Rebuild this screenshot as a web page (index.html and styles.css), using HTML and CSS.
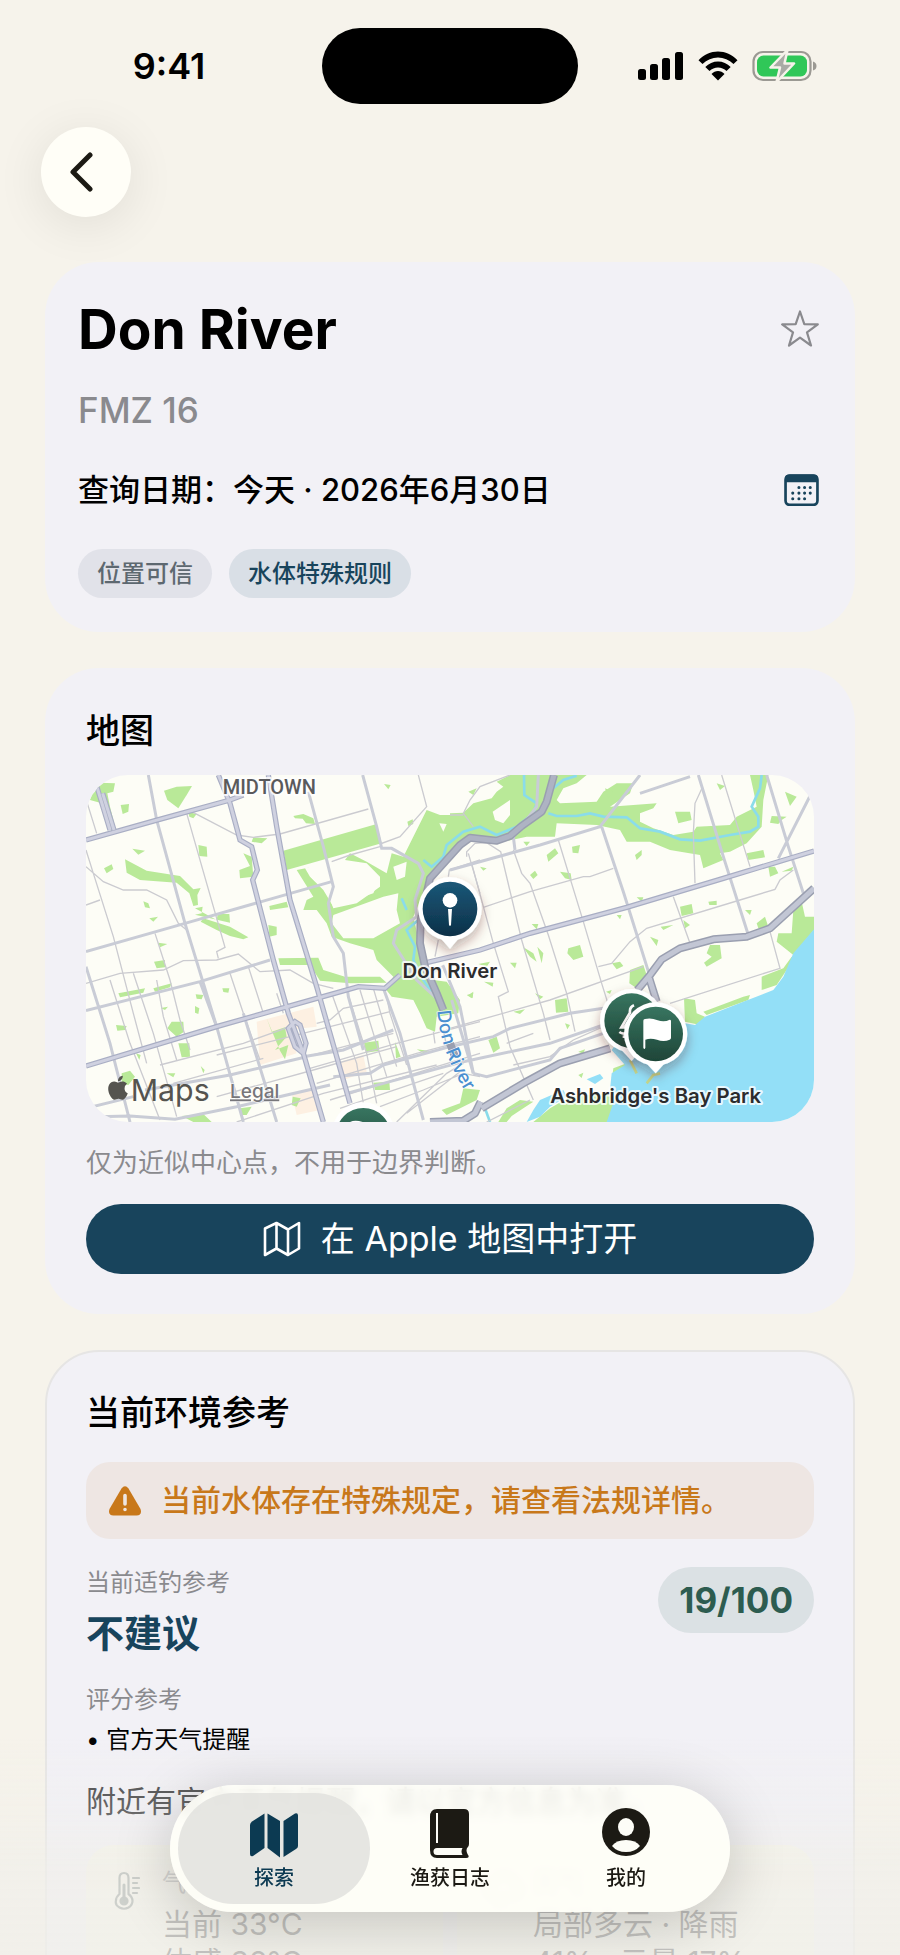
FILE: index.html
```html
<!DOCTYPE html>
<html lang="zh-CN">
<head>
  <meta charset="UTF-8" />
  <meta name="viewport" content="width=device-width, initial-scale=1.0" />
  <title>Don River</title>
  <link rel="stylesheet" href="styles.css">
</head>
<body>
  <div class="status-bar">
    <span class="time">9:41</span>
    <div class="island"></div>
    <div class="status-icons">
      <svg width="46" height="30" viewBox="0 0 46 30">
        <rect x="0" y="18" width="8" height="11" rx="2.5" />
        <rect x="12" y="13" width="8" height="16" rx="2.5" />
        <rect x="24" y="7" width="8" height="22" rx="2.5" />
        <rect x="37" y="1" width="8" height="28" rx="2.5" />
      </svg>
      <svg width="40" height="30" viewBox="0 0 40 30">
        <path d="M0.5 9.2C11-2.4 29-2.4 39.500 9.200L35.500 13C27 4.300 13 4.300 4.500 13z" />
        <path d="M7.300 16C14 8.500 26 8.500 32.700 16L28.500 20C24 15.200 16 15.200 11.500 20z" />
        <path d="M13.500 23C17 19 23 19 26.500 23L20 29.500z" />
      </svg>
      <svg width="66" height="32" viewBox="0 0 66 32">
        <rect x="1.500" y="2" width="57" height="28" rx="9.500" fill="none" stroke="#9b9993" stroke-width="2.200" />
        <rect x="5" y="5.500" width="50" height="21" rx="6.500" fill="#30c758" />
        <path d="M61 11.500q3.500 1 3.500 4.500t-3.500 4.500z" fill="#9b9993" />
        <path d="M35.500 0L18.500 17.500h9.500L24.500 32L42 13.500h-9.500z" fill="#a9aaa5" stroke="#f6f2ea" stroke-width="2.500" stroke-linejoin="round" />
      </svg>
    </div>
  </div>

  <nav class="nav">
    <button class="back" aria-label="返回">
      <svg width="24" height="40" viewBox="0 0 24 40"><path d="M20 3L3 20L20 37" fill="none" stroke="#1c1a14" stroke-width="5" stroke-linecap="round" stroke-linejoin="round" /></svg>
    </button>
  </nav>

  <main>
    <section class="card summary">
      <div class="row">
        <h1>Don River</h1>
        <button class="icon-btn" aria-label="收藏">
          <svg width="38" height="38" viewBox="0 0 38 38"><path d="M19 1.500L23.300 14.200L36.800 14.400L26 22.400L30 35.500L19 27.700L8 35.500L12 22.400L1.200 14.400L14.700 14.200z" fill="none" stroke="#8a8a8e" stroke-width="2.200" stroke-linejoin="round" /></svg>
        </button>
      </div>
      <p class="zone">FMZ 16</p>
      <div class="row date-row">
        <span>查询日期：今天 · 2026年6月30日</span>
        <button class="icon-btn" aria-label="选择日期">
          <svg width="35" height="32" viewBox="0 0 34 31">
            <rect x="1.500" y="1.500" width="31" height="28.500" rx="4" fill="none" stroke="#18445c" stroke-width="2.600" />
            <path d="M1 8V4q0-3.500 3.500-3.500h25q3.500 0 3.500 3.500v4z" fill="#18445c" />
            <path d="M14.500 13h0M20 13h0M25.500 13h0M8.500 18.500h0M14.500 18.500h0M20 18.500h0M25.500 18.500h0M8.500 24h0M14.500 24h0M20 24h0" stroke="#18445c" stroke-width="3" stroke-linecap="round" />
          </svg>
        </button>
      </div>
      <div class="chips">
        <span class="chip">位置可信</span>
        <span class="chip chip-blue">水体特殊规则</span>
      </div>
    </section>

    <section class="card map-card">
      <h2>地图</h2>
      <svg class="map" viewBox="168 345 2184 1041" preserveAspectRatio="xMidYMid slice">
        <defs>
          <linearGradient id="blue" x1="0" y1="0" x2="0" y2="1"><stop offset="0" stop-color="#1b5878" /><stop offset="1" stop-color="#0c3048" /></linearGradient>
          <linearGradient id="green" x1="0" y1="0" x2="0" y2="1"><stop offset="0" stop-color="#387560" /><stop offset="1" stop-color="#1e4538" /></linearGradient>
          <filter id="shadow" x="-40%" y="-40%" width="180%" height="190%"><feDropShadow dx="0" dy="16" stdDeviation="18" flood-color="#502020" flood-opacity=".35" /></filter>
          <path id="river-label" d="M1222 1052C1226 1100 1236 1150 1258 1200C1276 1250 1306 1295 1345 1360" />
        </defs>
        <rect x="168" y="345" width="2184" height="1045" fill="#fdfdf6" />

        <!-- commercial blocks -->
        <g fill="#fdf0e2">
          <path d="M680 1085L850 1040L860 1100L770 1110L800 1180L690 1215z" />
          <path d="M930 1205L1000 1185L1010 1235L940 1260z" />
          <path d="M785 1300L850 1290L870 1350L800 1365z" />
        </g>

        <!-- parks -->
        <g class="park">
          <path d="M205 368L255 370L250 395L232 400L240 440L258 512L245 515L215 430L180 420L185 405L205 385z" />
          <path d="M402 392L440 380L486 378L470 405L445 445L412 420z" />
          <path d="M272 435L297 432L295 455L278 462z" />
          <path d="M475 456L500 462L490 475L478 470z" />
          <path d="M505 555L530 560L532 590L508 588z" />
          <path d="M307 566L345 572L325 584z" />
          <path d="M222 625L245 613L250 627L230 640z" />
          <path d="M285 598L350 632L450 648L490 688L512 684L502 705L504 735L490 738L478 700L440 668L330 660L290 638z" />
          <path d="M340 724L355 730L360 745L345 742z" />
          <path d="M358 775L384 770L370 785z" />
          <path d="M495 745L518 740L515 760L495 764L600 788L598 762L563 762L560 780zM520 775L600 800L655 832L640 838L600 828L560 810L512 785z" />
          <path d="M640 580L665 590L670 650L630 655L628 630L660 618z" />
          <path d="M670 532L712 535L695 550L665 545z" />
          <path d="M790 468L820 462L850 475L855 492L828 490L818 476L795 475z" />
          <path d="M760 572L1040 492L1055 550L770 630z" />
          <path d="M800 630L850 620L860 650L890 690L910 745L980 730L1050 680L1050 650L1010 610L945 600L960 580L1010 605L1070 640L1085 580L1120 590L1190 450L1230 465L1290 465L1350 455L1390 500L1330 520L1290 555L1200 655L1150 770L1180 900L1210 960L1250 965L1290 1020L1285 1060L1220 1070L1215 1115L1190 1105L1170 1060L1150 1020L1085 1010L1065 985L1090 950L1040 900L1030 870L960 850L905 830L890 790L860 750L820 750L830 720L850 710z" />
          <path d="M745 895L865 893L880 930L945 950L1050 950L1070 968L960 970L870 962L840 915L750 915z" />
          <path d="M718 738L770 725L775 742L720 750z" />
          <path d="M715 795L740 800L740 825L718 830z" />
          <path d="M948 788L980 785L965 810z" />
          <path d="M385 848L412 852L390 862zM372 905L405 900L405 922L380 925z" />
          <path d="M265 1000L345 985L340 998L270 1012zM370 985L425 970L420 982L375 995z" />
          <path d="M577 985L598 985L595 998L580 996zM497 1003L520 1005L515 1018L500 1016zM495 1038L508 1045L505 1062L495 1058zM392 1044L414 1040L405 1050z" />
          <path d="M258 1095L290 1098L285 1110L262 1112zM412 1105L425 1085L460 1085L462 1115L440 1130zM445 1150L478 1150L480 1190L455 1192z" />
          <path d="M275 1240L300 1232L315 1250L295 1275L275 1272zM410 1240L436 1240L430 1252zM512 1218L524 1230L520 1240zM318 1180L332 1185L328 1200z" />
          <path d="M455 1368L520 1362L545 1386L490 1386zM630 1345L665 1340L650 1365L635 1365zM788 1310L812 1315L800 1340L785 1335z" />
          <path d="M710 1075L725 1115L765 1102L770 1130L735 1170L775 1155L765 1198L750 1172z" />
          <path d="M1002 1148L1045 1142L1048 1172L1008 1178zM1030 1268L1078 1265L1080 1290L1035 1290zM1160 1168L1195 1172L1185 1182zM1095 1145L1112 1190L1098 1195z" />
          <path d="M1235 1350L1290 1330L1300 1285L1350 1290L1340 1320L1250 1365zM1315 1005L1330 995L1328 1015z" />
          <path d="M1062 372L1082 375L1075 388zM1132 485L1148 478L1150 492L1135 498zM1315 395L1340 385L1330 405z" />
          <path d="M1260 460L1300 458L1330 430L1385 415L1400 395L1420 380L1400 365L1440 345L1670 345L1640 370L1600 385L1580 420L1590 430L1700 425L1720 395L1760 370L1810 370L1800 400L1740 440L1880 430L1870 445L1830 460L1830 485L1870 505L1930 525L1990 515L2000 500L2100 495L2120 470L2180 440L2170 390L2160 345L2215 345L2200 420L2195 500L2150 550L2100 575L2070 580L2080 600L2020 625L2010 585L1920 570L1860 545L1790 545L1770 510L1700 495L1580 490L1575 530L1490 530L1400 550L1260 540z" />
        </g>
        <g fill="#fdfdf6">
          <path d="M825 625L910 600L1000 615L1045 665L1030 700L910 740L880 690L840 650z" />
          <path d="M1090 620L1130 605L1125 650L1100 660z" />
          <path d="M910 765L1060 710L1105 700L1100 750L1110 790L1030 835L940 835L905 790z" />
          <path d="M1228 490L1250 492L1240 515z" />
          <path d="M1388 455L1440 420L1440 465L1420 490L1395 480z" />
        </g>
        <g class="park">
          <path d="M1935 455L1980 455L1985 480L1945 490zM1725 385L1750 395L1735 415zM2060 370L2085 378L2070 390zM2265 395L2300 410L2280 438z" />
          <path d="M2270 470L2255 480L2245 492L2220 488L2225 468z" />
          <path d="M1626 560L1650 555L1645 580L1628 578zM1550 585L1575 565L1585 580L1555 605zM1480 545L1500 545L1490 558zM1350 620L1370 625L1360 632z" />
          <path d="M1500 645L1515 632L1523 645L1510 657zM1590 635L1622 640L1625 660L1605 655z" />
          <path d="M1815 585L1835 570L1835 585L1820 600z" />
          <path d="M2150 580L2200 570L2205 592L2155 600zM2215 620L2235 620L2245 640L2220 650zM2255 635L2290 620L2285 632z" />
          <path d="M1820 712L1840 712L1835 725zM1760 765L1775 765L1770 778zM1505 792L1525 792L1520 808z" />
          <path d="M1950 740L1985 732L1990 760L1955 768zM2035 725L2060 722L2060 735L2038 735zM1960 780L1980 795L1965 805zM1892 800L1930 795L1900 810zM1860 830L1885 840L1880 858zM2145 750L2165 750L2160 765zM2180 790L2205 770L2215 800L2185 805z" />
          <path d="M2040 855L2070 855L2075 895L2030 920L2022 908L2045 890L2030 880z" />
          <path d="M2290 750L2315 725L2325 770L2352 770L2352 810L2290 885L2240 845L2245 820L2285 820z" />
          <path d="M2195 950L2260 925L2285 890L2290 900L2240 975L2195 990z" />
          <path d="M1962 1015L1995 1020L2000 1060L2025 1070L2010 1095L1965 1085zM2020 1055L2140 1010L2160 1005L2155 1020L2030 1065z" />
          <path d="M1800 930L1840 915L1855 960L1820 985L1798 970z" />
          <path d="M1615 865L1650 855L1660 890L1630 900L1612 880zM1478 860L1510 880L1520 905L1500 890zM1522 860L1540 880L1535 910zM1440 908L1460 908L1455 925zM1746 910L1770 905L1780 918L1760 928z" />
          <path d="M1575 1020L1610 1015L1615 1055L1578 1058zM1450 1055L1485 1048L1470 1062zM1605 1090L1620 1095L1612 1108zM1375 1140L1400 1130L1410 1165L1390 1178zM1515 1000L1540 1010L1530 1018zM1728 995L1745 990L1740 1002z" />
          <path d="M1345 912L1380 905L1370 920zM1362 965L1390 968L1388 980zM1310 1005L1330 1000L1325 1015zM1260 980L1285 1020L1280 1060L1262 1040z" />
          <path d="M1645 1175L1665 1168L1660 1182zM1645 1245L1660 1238L1655 1254zM1430 1345L1470 1320L1510 1325L1480 1345L1445 1368L1430 1386L1405 1386z" />
          <path d="M1510 1386L1560 1345L1620 1310L1740 1300L1750 1225L1790 1210L1785 1235L1745 1250L1760 1360L1730 1386z" />
        </g>

        <!-- lake and rivers -->
        <g fill="#93dff7">
          <path d="M2352 808L2290 880L2260 950L2230 990L2140 1025L2025 1070L1995 1095L1965 1090L1935 1150L1760 1150L1745 1170L1785 1215L1745 1240L1740 1290L1760 1300L1730 1386L2352 1390z" />
          <path d="M1490 1386L1510 1350L1530 1320L1600 1290L1610 1310L1560 1340L1530 1370z" />
          <path d="M1670 1258L1710 1242L1720 1255L1695 1272z" />
        </g>
        <path d="M1800 1200L1820 1240M1850 1270L1870 1245L1890 1240" fill="none" stroke="#c5d78c" stroke-width="8" />
        <g fill="none" stroke="#8adcea" stroke-width="8">
          <path d="M1482 345L1483 405L1520 430L1510 460L1460 500L1400 525L1350 500L1300 515L1250 555L1240 590L1205 620L1180 600" />
          <path d="M1555 460L1580 468L1640 468L1680 460L1720 470L1790 472L1830 505L1890 515L1950 538L2010 542L2100 525L2160 515L2185 500L2185 470L2165 440L2190 385L2195 345" />
          <path d="M1570 385L1600 360L1640 347" />
          <path d="M1115 715L1130 750M1165 780L1130 810L1155 860L1150 900L1180 960L1215 1010" />
          <path d="M1365 1345L1380 1386" />
        </g>

        <!-- minor streets -->
        <g fill="none" stroke="#cbcbd0" stroke-width="4">
          <path d="M172 430L200 520M470 460L530 670L585 862L560 875L565 895M485 455L620 525L670 532L750 522L1015 447M1165 345L1190 440L1110 530L1050 552M168 570L190 640L250 830L310 1060L350 1210M168 620L220 665L280 690L350 690L410 720L445 790L470 810" />
          <path d="M168 735L210 720M375 820L420 960L450 1080L480 1170M168 970L270 940L400 930L460 902L560 900L625 882L690 935L780 930L850 970L910 985" />
          <path d="M240 960L300 1150L390 1380M310 940L370 1120L440 1370M380 960L400 1070L440 1200M600 940L640 1060L690 1200M655 920L700 1060M740 1000L760 1060M1060 1020L940 1045L900 1080L860 1090M1080 1055L960 1085L560 1185" />
          <path d="M390 1215L640 1150L780 1100M430 1270L700 1195M560 1310L850 1230L1100 1160M620 1386L880 1300L1220 1215M905 1000L980 1210L1000 1330M950 990L1010 1180L1040 1330M990 990L1070 1250M1030 985L1100 1220M1070 1010L1080 1060L1130 1215" />
          <path d="M830 1190L1090 1120M840 1225L1100 1150L1350 1085M860 1270L1160 1180L1350 1130M900 1320L1220 1220L1350 1180M930 1345L1240 1240M1050 1340L1180 1290L1300 1240L1350 1250M1100 1386L1250 1240L1300 1210M1130 1360L1290 1235M1210 1115L1215 1150M1240 1110L1250 1160" />
          <path d="M1310 590L1310 575L1335 550L1370 548L1412 575L1425 630L1475 840L1540 1060L1560 1140M1325 610L1390 850L1435 995L1405 1010L1440 1160L1510 1320M1450 570L1475 640L1500 670L1555 825L1610 1000L1635 1115M1585 540L1660 785L1715 970L1740 1050" />
          <path d="M1360 742L1500 695L1660 650L1680 650L1750 625M1440 345L1350 380L1320 420L1300 460L1330 500M1260 465L1300 465M2018 380L1995 430L1990 520L1995 670M2075 345L2160 620M1930 710L1980 850M1705 920L1745 910L1800 845L1850 805L2130 720L2235 688L2250 660L2290 630" />
          <path d="M2220 815L2250 925L1920 1030M1260 1105L1560 1020L1840 920M1450 1215L1560 1190L1630 1140L1720 1100M1510 1120L1430 1150M1370 1386L1500 1320M905 605L960 585L1050 560M1315 580L1350 700M1255 650L1258 630L1350 600M1215 890L1225 840" />
        </g>

        <!-- arterials -->
        <g fill="none" stroke="#c9ccd6" stroke-width="9">
          <path d="M355 345L380 480L465 790L560 1100L640 1386M835 395L880 560L910 680L895 730L910 830L940 880L955 1010L1000 1170M998 345L1040 500L1055 565L1085 565L1165 610L1180 640L1155 720L1160 770L1100 810L1090 850L1160 960L1225 1020" />
          <path d="M168 875L465 790L905 665M168 1052L510 965L720 900M168 920L240 1150L300 1386M168 1345L310 1310M345 1290L600 1245L830 1190M200 1370L300 1368L435 1378L620 1340L900 1275M510 965L560 1100M640 1060L740 1386M820 1190L940 1170L1090 1110" />
          <path d="M1060 985L1110 1120L1180 1380M1180 950L1240 920L1290 1040L1330 1240M910 1250L1020 1240L1060 1215L1260 1160L1390 1130L1440 1105L1620 1060L1720 1045M950 1300L1300 1205L1560 1150L1720 1095M1330 1240L1370 1250L1560 1200L1590 1165L1720 1120" />
          <path d="M1260 630L1530 555L1710 500L1830 345M1715 500L1780 695L1860 950M1265 1020L1330 1240M1525 345L1520 440L1450 530L1455 570M1830 400L1980 350M2005 345L2080 590L2155 825M2210 345L2275 560L2320 700M2340 408L2245 595" />
        </g>

        <!-- main roads -->
        <g fill="none" stroke="#a9aec4" stroke-width="16">
          <path id="main-roads" d="M168 540L375 482L600 420L640 405M200 378L240 510M218 400L252 510M565 345L600 430L630 540L665 560L682 630L668 660L730 900L775 1060L820 1180L880 1386M715 345L740 500L780 720L860 980L960 1330M168 1218L560 1100L860 1015L985 980L1065 985L1110 945M1180 910L1350 870L1500 820L1790 742L2080 655L2352 573M795 1085L775 1105L795 1160L820 1180L828 1150L810 1095z" />
        </g>
        <use href="#main-roads" class="road-fill" />
        <g fill="none" stroke="#9a9fb0" stroke-width="24" stroke-linejoin="round">
          <path d="M1572 345L1550 425L1535 455L1475 498L1440 528L1400 542L1320 533L1290 555L1200 655L1172 780L1170 850L1185 920L1220 1000L1240 1050M1260 1150L1275 1190" />
          <path d="M1352 1325L1335 1360L1300 1382L1200 1386M1355 1345L1480 1270L1590 1210L1740 1165M1822 990L1860 945L1895 898L1950 865L2050 838L2150 830L2220 805L2352 685M1858 955L1880 1025" />
        </g>
        <g fill="none" stroke="#c2c6d4" stroke-width="15" stroke-linejoin="round">
          <path d="M1352 1325L1335 1360L1300 1382L1200 1386M1355 1345L1480 1270L1590 1210L1740 1165M1822 990L1860 945L1895 898L1950 865L2050 838L2150 830L2220 805L2352 685M1858 955L1880 1025" />
          <path d="M1572 345L1550 425L1535 455L1475 498L1440 528L1400 542L1320 533L1290 555L1200 655L1172 780L1170 850L1185 920L1220 1000L1240 1050" stroke="#aeb3c3" />
        </g>

        <!-- labels -->
        <text class="district" x="578" y="403">MIDTOWN</text>
        <text class="river"><textPath href="#river-label">Don River</textPath></text>

        <!-- pins -->
        <g filter="url(#shadow)">
          <path d="M1226 828L1260 866L1292 828z" fill="#fff" />
          <circle cx="1260" cy="747" r="95" fill="#fff" />
          <circle cx="1260" cy="747" r="82" fill="url(#blue)" />
          <circle cx="1260" cy="721" r="22" fill="#fff" />
          <path d="M1254 747h12l-3 47q-3 8-6 0z" fill="#fff" />
        </g>
        <g filter="url(#shadow)">
          <path d="M1770 1165L1805 1203L1838 1165z" fill="#fff" />
          <circle cx="1805" cy="1082" r="95" fill="#fff" />
          <circle cx="1805" cy="1082" r="82" fill="url(#green)" />
          <path d="M1812 1036q-14 6-12 22l-26 44h40M1768 1116q14 10 30-2M1778 1130h25" fill="none" stroke="#fff" stroke-width="8" />
          <path d="M1808 1062L1830 1050L1820 1104L1778 1100z" fill="#fff" />
        </g>
        <g filter="url(#shadow)">
          <path d="M1842 1202L1877 1240L1911 1202z" fill="#fff" />
          <circle cx="1877" cy="1122" r="95" fill="#fff" />
          <circle cx="1877" cy="1122" r="82" fill="url(#green)" />
          <path d="M1840 1082q0-5 5-5q18-5 38 4q20 7 36-2q4 0 4 4v50q0 4-4 6q-18 8-38 0q-20-6-35 0v24q-3 8-6 0z" fill="#fff" />
        </g>
        <circle cx="1000" cy="1422" r="95" fill="#fff" />
        <circle cx="1000" cy="1426" r="82" fill="url(#green)" />
        <path d="M960 1386q15-8 38 0h42v10h-80z" fill="#fff" />
        <text class="place" x="1260" y="953" text-anchor="middle">Don River</text>
        <text class="place" x="1877" y="1329" text-anchor="middle">Ashbridge's Bay Park</text>

        <g transform="translate(228 1247) scale(3)" fill="#55544f">
          <path d="M12.152 6.896c-.948 0-2.415-1.078-3.960-1.040-2.040.027-3.910 1.183-4.961 3.014-2.117 3.675-.546 9.103 1.519 12.090 1.013 1.454 2.208 3.090 3.792 3.039 1.520-.065 2.090-.987 3.935-.987 1.831 0 2.350.987 3.960.948 1.637-.026 2.676-1.480 3.676-2.948 1.156-1.688 1.636-3.325 1.662-3.415-.039-.013-3.182-1.221-3.220-4.857-.026-3.040 2.480-4.494 2.597-4.559-1.429-2.090-3.623-2.324-4.390-2.376-2-.156-3.675 1.090-4.610 1.090zM15.530 3.830c.843-1.012 1.400-2.427 1.245-3.830-1.207.052-2.662.805-3.532 1.818-.780.896-1.454 2.338-1.273 3.714 1.338.104 2.715-.688 3.560-1.701" />
        </g>
        <text class="brand" x="302" y="1322">Maps</text>
        <a href="#legal"><text class="legal" x="600" y="1315">Legal</text></a>
      </svg>
      <p class="caption">仅为近似中心点，不用于边界判断。</p>
      <button class="open-maps">
        <svg width="38" height="36" viewBox="0 0 38 36"><path d="M2 7.500L13.500 2L25 8.500L36 2V27.500L25 34L13.500 27.500L2 34zM13.500 2V27.500M25 8.500V34" fill="none" stroke="#fff" stroke-width="2.600" stroke-linejoin="round" /></svg>
        <span>在 Apple 地图中打开</span>
      </button>
    </section>

    <section class="card env-card">
      <h2>当前环境参考</h2>
      <div class="alert">
        <svg width="34" height="30" viewBox="0 0 34 30">
          <path d="M13.500 2.500q3.500-4.500 7 0L32.500 23q2 6-4 6.500H5.500q-6-.5-4-6.500z" fill="#c8781a" />
          <path d="M17 9.500v8.500M17 23.500v0" stroke="#eee6e2" stroke-width="3.600" stroke-linecap="round" />
        </svg>
        <span>当前水体存在特殊规定，请查看法规详情。</span>
      </div>
      <div class="score-row">
        <div>
          <p class="label">当前适钓参考</p>
          <p class="verdict">不建议</p>
        </div>
        <span class="score">19/100</span>
      </div>
      <p class="label factors">评分参考</p>
      <p class="factor">• 官方天气提醒</p>
      <p class="notice">附近有官方天气提醒，请以官方信息为准。</p>
      <div class="weather">
        <div class="tile">
          <svg width="26" height="40" viewBox="0 0 26 40" fill="none" stroke="#6d7a78" stroke-width="2.200" stroke-linecap="round">
            <path d="M5.500 23V7q0-5 4.500-5t4.500 5v16q4 3 4 7t-4 6.500q-4.500 2.500-9 0T1.900 30q0-4 3.600-7z" />
            <path d="M10 14v14" stroke-width="3" />
            <circle cx="10" cy="30" r="3.500" fill="#6d7a78" />
            <path d="M19 7h6M19 12h4M19 17h6M19 22h4" />
          </svg>
          <div>
            <p class="label">气温</p>
            <p>当前 33°C</p>
            <p>体感 38°C</p>
          </div>
        </div>
        <div class="tile">
          <svg width="36" height="40" viewBox="0 0 36 40" fill="none" stroke="#6d7a78" stroke-width="2.200"><path d="M9 26q-7-1-7-7t7-7q2-8 10-8t10 8q6 1 6 7t-7 7zM12 31l-2 4M20 31l-2 4" /></svg>
          <div>
            <p class="label">天气</p>
            <p>局部多云 · 降雨</p>
            <p>41% · 云量 17%</p>
          </div>
        </div>
      </div>
    </section>
  </main>

  <div class="fade"></div>
  <nav class="tab-bar">
    <a href="#explore" class="tab active">
      <svg width="50" height="48" viewBox="0 0 50 48" fill="#0c3a52">
        <path d="M15.500 2.500V37L4 45q-3 1-3-2V14q0-2 2-3.500z" />
        <path d="M18.500 2.500L31 10V46.500L18.500 37z" />
        <path d="M34.500 10L46 2.500q3-1 3 2V35q0 2-2 3L34.500 46z" />
      </svg>
      <span>探索</span>
    </a>
    <a href="#log" class="tab">
      <svg width="42" height="52" viewBox="0 0 42 52">
        <path d="M8 1h27q5 0 5 5v30q0 2-1.500 3.500q-2 2.500 0 6.500q3 4-1.500 4H8q-7 0-7-8V9q0-8 7-8z" fill="#1c1a14" />
        <path d="M8 5v30" stroke="#fdfdf7" stroke-width="2" />
        <path d="M8 40h25.500q-2 3.500 0 7H8q-3.500 0-3.500-3.500T8 40z" fill="#fdfdf7" />
      </svg>
      <span>渔获日志</span>
    </a>
    <a href="#me" class="tab">
      <svg width="48" height="48" viewBox="0 0 48 48">
        <circle cx="24" cy="24" r="24" fill="#1c1a14" />
        <ellipse cx="24" cy="19" rx="8" ry="9" fill="#fdfdf7" />
        <path d="M10 38q4-6 14-6t14 6q-5 6-14 6t-14-6z" fill="#fdfdf7" />
      </svg>
      <span>我的</span>
    </a>
  </nav>
</body>
</html>
```
FILE: styles.css
```css
* {
  box-sizing: border-box;
}
body {
  margin: 0;
  height: 100vh;
  overflow: hidden;
  background: #f6f3eb;
  color: #000;
  font-family: Inter, "Noto Sans CJK SC", sans-serif;
}
h1, h2, p {
  margin: 0;
}
button {
  padding: 0;
  border: none;
  background: none;
  font: inherit;
  cursor: pointer;
}
svg {
  display: block;
  flex: none;
}

/* status bar */
.status-bar {
  display: grid;
  grid-template-columns: 1fr 256px 1fr;
  align-items: center;
  padding: 28px 0 23px;
}
.time {
  padding-left: 16px;
  text-align: center;
  font-size: 36px;
  line-height: 44px;
  font-weight: 600;
}
.island {
  height: 76px;
  border-radius: 38px;
  background: #000;
}
.status-icons {
  display: flex;
  align-items: center;
  justify-content: center;
  gap: 14px;
  padding-right: 22px;
}

.nav {
  padding: 0 41px;
  margin-bottom: 45px;
}
.back {
  display: flex;
  align-items: center;
  justify-content: center;
  width: 90px;
  height: 90px;
  padding-right: 8px;
  border-radius: 50%;
  background: #fffef7;
  box-shadow: 0 8px 50px rgba(0, 0, 0, 0.09);
}

/* cards */
main {
  display: flex;
  flex-direction: column;
  gap: 36px;
  padding: 0 45px;
}
.card {
  padding: 40px 41px;
  border-radius: 54px;
  background: #f2f1f6;
}
.summary {
  padding: 33px 36px 34px 33px;
}
.row {
  display: flex;
  align-items: center;
  justify-content: space-between;
}
h1 {
  font-size: 55px;
  line-height: 68px;
  font-weight: 700;
}
h2 {
  font-size: 34px;
  line-height: 46px;
  font-weight: 500;
}
.zone {
  margin-top: 26px;
  font-size: 35px;
  line-height: 42px;
  font-weight: 500;
  color: #8a8a8e;
}
.date-row {
  margin-top: 38px;
  font-size: 31px;
  line-height: 42px;
  font-weight: 500;
}
.chips {
  display: flex;
  gap: 17px;
  margin-top: 38px;
}
.chip {
  padding: 0 19px;
  border-radius: 25px;
  background: #e1e2e9;
  color: #5d6870;
  font-size: 24px;
  line-height: 49px;
  font-weight: 500;
}
.chip-blue {
  background: #d9dfe6;
  color: #18445c;
}

/* map */
.map {
  width: 100%;
  height: 347px;
  margin-top: 21px;
  border-radius: 42px;
}
.park {
  fill: #b9e998;
}
.road-fill {
  fill: none;
  stroke: #cfd1e0;
  stroke-width: 9px;
}
.map text {
  paint-order: stroke;
  stroke: rgba(255, 255, 255, 0.8);
  stroke-width: 12px;
  stroke-linejoin: round;
}
.map .district {
  font: 500 60px Roboto, sans-serif;
  fill: #5a5a5c;
}
.map .river {
  font-size: 56px;
  font-weight: 500;
  fill: #4a8fd0;
  stroke-width: 4px;
}
.map .place {
  font-size: 61px;
  font-weight: 600;
  fill: #2c2c2e;
}
.map .brand {
  font-size: 91px;
  fill: #55544f;
  stroke: none;
}
.map .legal {
  font-size: 57px;
  font-weight: 500;
  fill: #77767a;
  text-decoration: underline;
  stroke-width: 4px;
}
.caption {
  margin-top: 24px;
  font-size: 26px;
  line-height: 34px;
  font-weight: 400;
  color: #8a8a8e;
}
.open-maps {
  display: flex;
  align-items: center;
  justify-content: center;
  gap: 20px;
  width: 100%;
  height: 70px;
  margin-top: 24px;
  border-radius: 35px;
  background: #18445c;
  color: #fff;
  font-size: 34px;
  line-height: 48px;
}

/* environment */
.env-card {
  padding: 38px 39px;
  border: 2px solid #e6e5e4;
}
.alert {
  display: flex;
  align-items: center;
  gap: 19px;
  margin-top: 26px;
  padding: 0 22px;
  border-radius: 24px;
  background: #eee6e3;
  color: #c8781a;
  font-size: 30px;
  line-height: 77px;
  font-weight: 500;
}
.score-row {
  display: flex;
  align-items: flex-start;
  justify-content: space-between;
  margin-top: 28px;
}
.label {
  font-size: 24px;
  line-height: 32px;
  color: #8a8a8e;
}
.verdict {
  margin-top: 8px;
  font-size: 38px;
  line-height: 52px;
  font-weight: 700;
  color: #18445c;
}
.score {
  padding: 0 21px;
  border-radius: 33px;
  background: #dbe1e4;
  color: #2d5c50;
  font-size: 35px;
  line-height: 66px;
  font-weight: 700;
}
.factors {
  margin-top: 25px;
}
.factor {
  margin-top: 8px;
  font-size: 24px;
  line-height: 32px;
}
.notice {
  margin-top: 25px;
  font-size: 30px;
  line-height: 40px;
  color: #3c3c3e;
}
.weather {
  display: grid;
  grid-template-columns: 1fr 1fr;
  gap: 14px;
  margin-top: 24px;
}
.tile {
  display: grid;
  grid-template-columns: 32px 1fr;
  gap: 16px;
  padding: 22px 28px;
  border-radius: 28px;
  background: #f6f5ea;
  color: #3c3c3e;
  font-size: 30px;
  line-height: 38px;
}
.tile svg {
  margin-top: 4px;
}
.tile .label {
  margin-bottom: 6px;
}

/* tab bar */
.fade {
  position: fixed;
  left: 0;
  right: 0;
  bottom: 0;
  height: 220px;
  background: linear-gradient(rgba(240, 239, 234, 0), rgba(240, 239, 234, 0.25) 35%, rgba(240, 239, 234, 0.72) 60%, rgba(240, 239, 234, 0.76));
}
.tab-bar {
  position: fixed;
  left: 50%;
  bottom: 43px;
  display: flex;
  padding: 8px;
  border-radius: 64px;
  background: rgba(255, 255, 248, 0.88);
  backdrop-filter: blur(4px);
  box-shadow: 0 10px 60px rgba(0, 0, 0, 0.2);
  transform: translateX(-50%);
}
.tab {
  display: flex;
  flex-direction: column;
  align-items: center;
  justify-content: space-between;
  width: 192px;
  height: 111px;
  padding: 15px 0 11px;
  border-radius: 56px;
  color: #1c1a14;
  font-size: 20px;
  line-height: 30px;
  font-weight: 500;
  text-decoration: none;
}
.tab + .tab {
  margin-left: -16px;
}
.tab.active {
  padding-top: 18px;
  background: rgba(226, 226, 222, 0.85);
  color: #0c3a52;
}
```
